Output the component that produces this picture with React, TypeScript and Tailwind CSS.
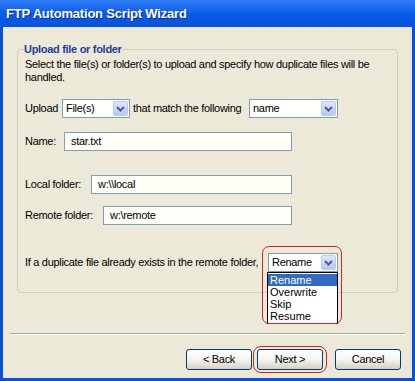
import React from "react";

const font = { fontFamily: '"Liberation Sans", Arial, sans-serif' };

function ComboArrow() {
    return (
        <span className="flex h-[15px] w-[15px] items-center justify-center rounded-[2px] border border-[#b9cbf3] bg-gradient-to-b from-[#dfe8fd] to-[#b5c8f5]">
            <svg width="9" height="6" viewBox="0 0 9 6">
                <path d="M1 1 L4.5 4.5 L8 1" stroke="#4d6185" strokeWidth="2" fill="none" />
            </svg>
        </span>
    );
}

function Combo({ value, className }: { value: string; className: string }) {
    return (
        <div className={`flex h-[19px] items-center justify-between border border-[#7f9db9] bg-white pl-[3px] pr-[1px] ${className}`}>
            <span>{value}</span>
            <ComboArrow />
        </div>
    );
}

function TextBox({ value, className }: { value: string; className: string }) {
    return (
        <div className={`flex h-[19px] items-center border border-[#7f9db9] bg-[#fffff8] pl-[6px] ${className}`}>
            {value}
        </div>
    );
}

function XpButton({ label }: { label: string }) {
    return (
        <button className="h-[21px] w-[66px] rounded-[3px] border border-[#003c74] bg-gradient-to-b from-white via-[#f4f4f0] to-[#d6d0c5] text-[11px] tracking-[-0.3px] text-black">
            {label}
        </button>
    );
}

export default function App() {
    return (
        <div className="flex h-[381px] w-[415px] flex-col bg-[#0a4fd8] text-[11px] tracking-[-0.3px] text-black" style={font}>
            {/* title bar */}
            <div className="flex h-[27px] items-center bg-gradient-to-b from-[#2f7cf6] via-[#0a5ce8] to-[#0652e0] pl-[6px] pt-[1px]">
                <span className="text-[13px] font-bold tracking-[-0.2px] text-white" style={{ textShadow: "1px 1px 0 #0a2f8a" }}>
                    FTP Automation Script Wizard
                </span>
            </div>

            <div className="mx-[3px] mb-[3px] flex flex-1 flex-col bg-[#ece9d8]">
                <fieldset className="mx-[14px] mt-[16px] h-[250px] rounded-[4px] border border-[#d0d0bf] px-[7px]">
                    <legend className="ml-[-1px] px-[0px] text-[11px] font-bold leading-[13px] text-[#1c3d9c]">
                        Upload file or folder
                    </legend>
                    <p className="mt-[2px] leading-[13px]">
                        Select the file(s) or folder(s) to upload and specify how duplicate files will be handled.
                    </p>

                    <div className="mt-[15px] flex items-center">
                        <span className="w-[37px]">Upload</span>
                        <Combo value="File(s)" className="w-[68px]" />
                        <span className="ml-[3px] w-[116px]">that match the following</span>
                        <Combo value="name" className="w-[89px]" />
                    </div>

                    <div className="mt-[14px] flex items-center">
                        <span className="w-[39px]">Name:</span>
                        <TextBox value="star.txt" className="w-[228px]" />
                    </div>

                    <div className="mt-[24px] flex items-center">
                        <span className="w-[66px]">Local folder:</span>
                        <TextBox value="w:\\local" className="w-[201px]" />
                    </div>

                    <div className="mt-[12px] flex items-center">
                        <span className="w-[78px]">Remote folder:</span>
                        <TextBox value="w:\remote" className="w-[189px]" />
                    </div>

                    <div className="mt-[28px] flex items-center">
                        <span className="w-[243px] whitespace-nowrap">If a duplicate file already exists in the remote folder,</span>
                        <div className="relative">
                            <Combo value="Rename" className="w-[70px]" />
                            <ul className="absolute left-[-1px] top-[19px] z-10 w-[71px] border border-black bg-white py-[1px] text-[11px] leading-[12px] tracking-normal">
                                <li className="bg-[#316ac5] pl-[2px] text-white">Rename</li>
                                <li className="pl-[2px]">Overwrite</li>
                                <li className="pl-[2px]">Skip</li>
                                <li className="pl-[2px]">Resume</li>
                            </ul>
                            <div className="pointer-events-none absolute left-[-6px] top-[-7px] z-20 h-[78px] w-[80px] rounded-[7px] border border-[#c8262a]" />
                        </div>
                    </div>
                </fieldset>

                <div className="mx-[7px] mt-[40px] border-t border-b border-t-[#aca899] border-b-white" />

                <div className="mt-[14px] flex justify-end gap-[5px] pr-[11px]">
                    <XpButton label="< Back" />
                    <div className="relative">
                        <XpButton label="Next >" />
                        <div className="pointer-events-none absolute left-[-4px] top-[-3px] h-[27px] w-[74px] rounded-[8px] border border-[#c8262a]" />
                    </div>
                    <div className="w-[2px]" />
                    <XpButton label="Cancel" />
                </div>
            </div>
        </div>
    );
}
